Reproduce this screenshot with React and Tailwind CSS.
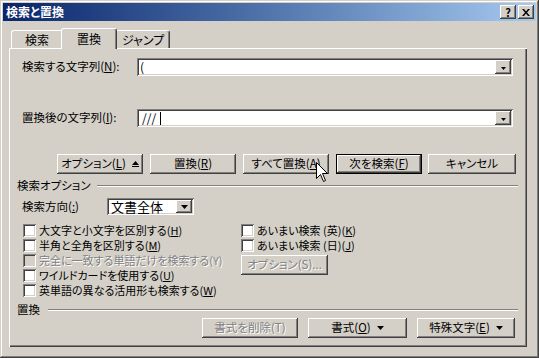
import React from 'react';

const raised =
  'shadow-[inset_-1px_-1px_#404040,inset_1px_1px_#ffffff,inset_-2px_-2px_#808080,inset_2px_2px_#d4d0c8]';
const sunken =
  'shadow-[inset_1px_1px_#808080,inset_-1px_-1px_#ffffff,inset_2px_2px_#404040,inset_-2px_-2px_#d4d0c8]';
const grayText = 'text-[#808080] [text-shadow:1px_1px_#ffffff]';

function Btn({ children, w, disabled, def }) {
  return (
    <div
      className={`flex items-center justify-center h-[20px] bg-[#d4d0c8] ${
        def ? 'border border-black' : ''
      } ${disabled ? grayText : 'text-black'}`}
      style={{ width: w }}
    >
      <div className={`flex items-center justify-center w-full h-full gap-[6px] ${raised}`}>{children}</div>
    </div>
  );
}

function DropArrow({ big }) {
  return (
    <div className={`flex justify-center w-[16px] h-full bg-[#d4d0c8] ${raised} ${big ? 'items-center' : 'items-end pb-[4px]'}`}>
      <svg width={big ? 7 : 5} height={big ? 4 : 3} viewBox={big ? '0 0 7 4' : '0 0 5 3'}>
        <path d={big ? 'M0 0h7L3.5 4z' : 'M0 0h5L2.5 3z'} fill="#000" />
      </svg>
    </div>
  );
}

function Combo({ children }) {
  return (
    <div className={`flex w-[376px] h-[18px] bg-white p-[2px] ${sunken}`}>
      <div className="flex-1 flex items-center pl-[1px] text-[12px] leading-none">{children}</div>
      <DropArrow />
    </div>
  );
}

function Check({ children, disabled }) {
  return (
    <div className="flex items-center h-[15px] gap-[3px]">
      <div className={`w-[13px] h-[13px] shrink-0 ${disabled ? 'bg-[#d4d0c8]' : 'bg-white'} ${sunken}`} />
      <span className={`whitespace-nowrap text-[11px] ${disabled ? grayText : ''}`}>{children}</span>
    </div>
  );
}

function Section({ title, lineLeft }) {
  return (
    <div className="flex items-center h-[14px] ml-[8px] mr-[9px]">
      <span className="whitespace-nowrap">{title}</span>
      <div className="flex-1 border-t border-t-[#808080] border-b border-b-white" style={{ marginLeft: lineLeft }} />
    </div>
  );
}

export default function App() {
  return (
    <div
      className="relative w-[539px] h-[358px] bg-[#d4d0c8] p-[3px] text-[11.5px] leading-none text-black font-['Noto_Sans_CJK_JP','Noto_Sans',sans-serif] [font-feature-settings:'palt'] shadow-[inset_-1px_-1px_#404040,inset_1px_1px_#d4d0c8,inset_-2px_-2px_#808080,inset_2px_2px_#ffffff]"
    >
      {/* title bar */}
      <div className="flex items-center h-[18px] pl-[3px] pr-[2px] bg-linear-to-r from-[#0a246a] to-[#a6caf0]">
        <span className="text-white font-bold text-[12px]">検索と置換</span>
        <div className="ml-auto flex gap-[2px]">
          <div className={`w-[16px] h-[14px] bg-[#d4d0c8] flex items-center justify-center font-bold text-[11px] ${raised}`}>?</div>
          <div className={`w-[16px] h-[14px] bg-[#d4d0c8] flex items-center justify-center ${raised}`}>
            <svg width="8" height="7" viewBox="0 0 8 7">
              <path d="M0 0h2l2 2.5L6 0h2L5 3.5 8 7H6L4 4.5 2 7H0l3-3.5z" fill="#000" />
            </svg>
          </div>
        </div>
      </div>

      <div className="pl-[6px] pt-[7px]">
        {/* tabs */}
        <div className="flex items-end h-[20px] pl-[2px] text-[12px]">
          <div className="flex items-center justify-center w-[51px] h-[18px] border-t border-l border-white rounded-tl-[3px] mr-[-1px]">
            検索
          </div>
          <div className="relative z-10 flex items-center justify-center w-[56px] h-[21px] -mb-px bg-[#d4d0c8] border-t border-l border-white border-r border-r-[#404040] rounded-t-[3px] shadow-[inset_-1px_0_#808080]">
            置換
          </div>
          <div className="flex items-center justify-center w-[53px] h-[18px] border-t border-t-white border-r border-r-[#404040] rounded-tr-[3px] shadow-[inset_-1px_0_#808080]">
            ジャンプ
          </div>
        </div>

        {/* panel */}
        <div className="flex flex-col w-[518px] h-[299px] shadow-[inset_1px_1px_#ffffff,inset_-1px_-1px_#404040,inset_-2px_-2px_#808080]">
          <div className="flex items-center h-[18px] mt-[10px] ml-[13px]">
            <span className="w-[115px]">検索する文字列(<u>N</u>):</span>
            <Combo>(</Combo>
          </div>

          <div className="flex items-center h-[18px] mt-[33px] ml-[13px]">
            <span className="w-[115px]">置換後の文字列(<u>I</u>):</span>
            <Combo>
              <span className="pl-[2px]">///</span>
              <span className="ml-[4px] w-px h-[13px] bg-black" />
            </Combo>
          </div>

          <div className="flex mt-[27px] ml-[48px] gap-[7px]">
            <Btn w={86}>
              <span>オプション(<u>L</u>)</span>
              <svg width="7" height="6" viewBox="0 0 7 6">
                <path d="M3.5 0L7 4H0z" fill="#000" />
                <rect x="0" y="5" width="7" height="1" fill="#000" />
              </svg>
            </Btn>
            <Btn w={86}>
              <span>置換(<u>R</u>)</span>
            </Btn>
            <Btn w={86}>
              <span>すべて置換(<u>A</u>)</span>
            </Btn>
            <Btn w={86} def>
              <span>次を検索(<u>F</u>)</span>
            </Btn>
            <div className="ml-[-1px]">
              <Btn w={88}>
                <span>キャンセル</span>
              </Btn>
            </div>
          </div>

          <div className="mt-[5px]">
            <Section title="検索オプション" lineLeft={6} />
          </div>

          <div className="flex items-center h-[17px] mt-[5px] ml-[13px]">
            <span className="w-[85px]">検索方向(<u>:</u>)</span>
            <div className={`flex w-[87px] h-[17px] bg-white p-[2px] ${sunken}`}>
              <div className="flex-1 flex items-center pl-[2px] text-[13px]">文書全体</div>
              <DropArrow big />
            </div>
          </div>

          <div className="flex mt-[8px] ml-[14px]">
            <div className="flex flex-col w-[218px]">
              <Check>大文字と小文字を区別する(<u>H</u>)</Check>
              <Check>半角と全角を区別する(<u>M</u>)</Check>
              <Check disabled>完全に一致する単語だけを検索する(Y)</Check>
              <Check>ワイルドカードを使用する(<u>U</u>)</Check>
              <Check>英単語の異なる活用形も検索する(<u>W</u>)</Check>
            </div>
            <div className="flex flex-col">
              <Check>あいまい検索 (英)(<u>K</u>)</Check>
              <Check>あいまい検索 (日)(<u>J</u>)</Check>
              <div className="mt-[2px]">
                <Btn w={87} disabled>
                  <span>オプション(S)...</span>
                </Btn>
              </div>
            </div>
          </div>

          <div className="mt-[5px]">
            <Section title="置換" lineLeft={8} />
          </div>

          <div className="flex justify-end gap-[10px] mt-px mr-[12px]">
            <Btn w={96} disabled>
              <span>書式を削除(T)</span>
            </Btn>
            <Btn w={99}>
              <span>書式(<u>O</u>)</span>
              <svg width="7" height="4" viewBox="0 0 7 4">
                <path d="M0 0h7L3.5 4z" fill="#000" />
              </svg>
            </Btn>
            <Btn w={98}>
              <span>特殊文字(<u>E</u>)</span>
              <svg width="7" height="4" viewBox="0 0 7 4">
                <path d="M0 0h7L3.5 4z" fill="#000" />
              </svg>
            </Btn>
          </div>
        </div>
      </div>

      {/* mouse pointer */}
      <svg className="absolute left-[316px] top-[162px]" width="12" height="20" viewBox="0 0 12 20">
        <path d="M0.5 0.5V16.5L4.5 12.5L7.5 19.5L9.5 18.5L6.5 11.5H11.5Z" fill="#fff" stroke="#000" strokeWidth="1" />
      </svg>
    </div>
  );
}
